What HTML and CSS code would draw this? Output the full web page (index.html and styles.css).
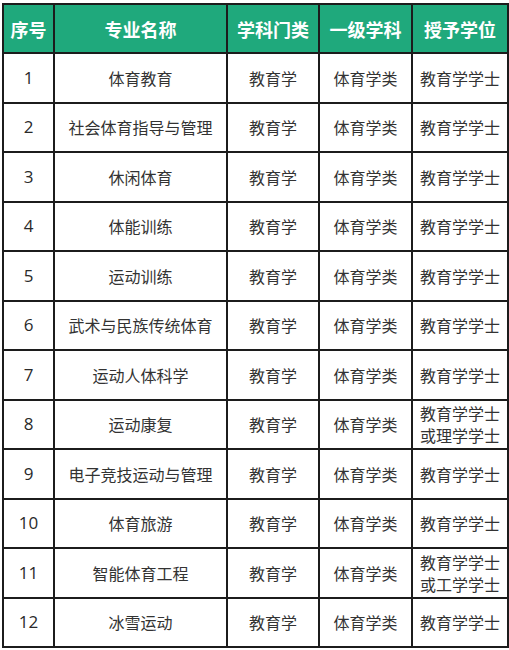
FILE: index.html
```html
<!DOCTYPE html>
<html lang="zh">
<head>
<meta charset="utf-8">
<link rel="stylesheet" href="styles.css">
</head>
<body>
<table class="majors">
  <colgroup>
    <col class="c-no"><col class="c-name"><col class="c-cat"><col class="c-sub"><col class="c-deg">
  </colgroup>
  <thead>
    <tr><th>序号</th><th>专业名称</th><th>学科门类</th><th>一级学科</th><th>授予学位</th></tr>
  </thead>
  <tbody>
    <tr><td>1</td><td>体育教育</td><td>教育学</td><td>体育学类</td><td>教育学学士</td></tr>
    <tr><td>2</td><td>社会体育指导与管理</td><td>教育学</td><td>体育学类</td><td>教育学学士</td></tr>
    <tr><td>3</td><td>休闲体育</td><td>教育学</td><td>体育学类</td><td>教育学学士</td></tr>
    <tr><td>4</td><td>体能训练</td><td>教育学</td><td>体育学类</td><td>教育学学士</td></tr>
    <tr><td>5</td><td>运动训练</td><td>教育学</td><td>体育学类</td><td>教育学学士</td></tr>
    <tr><td>6</td><td>武术与民族传统体育</td><td>教育学</td><td>体育学类</td><td>教育学学士</td></tr>
    <tr><td>7</td><td>运动人体科学</td><td>教育学</td><td>体育学类</td><td>教育学学士</td></tr>
    <tr><td>8</td><td>运动康复</td><td>教育学</td><td>体育学类</td><td class="two">教育学学士<br>或理学学士</td></tr>
    <tr><td>9</td><td>电子竞技运动与管理</td><td>教育学</td><td>体育学类</td><td>教育学学士</td></tr>
    <tr><td>10</td><td>体育旅游</td><td>教育学</td><td>体育学类</td><td>教育学学士</td></tr>
    <tr><td>11</td><td>智能体育工程</td><td>教育学</td><td>体育学类</td><td class="two">教育学学士<br>或工学学士</td></tr>
    <tr><td>12</td><td>冰雪运动</td><td>教育学</td><td>体育学类</td><td>教育学学士</td></tr>
  </tbody>
</table>
</body>
</html>
```
FILE: styles.css
```css
html, body {
  margin: 0;
  padding: 0;
  background: #ffffff;
}
body {
  font-family: "Noto Sans CJK SC", "Noto Sans", sans-serif;
}
.majors {
  border-collapse: collapse;
  table-layout: fixed;
  width: 505px;
  margin: 3px 0 0 2px;
}
.c-no { width: 51px; }
.c-name { width: 173px; }
.c-cat { width: 92px; }
.c-sub { width: 93px; }
.c-deg { width: 96px; }
.majors th,
.majors td {
  border: 2px solid #1c1c1c;
  padding: 0;
  text-align: center;
  vertical-align: middle;
}
.majors th {
  background: #1fa97c;
  color: #ffffff;
  font-size: 18px;
  font-weight: 700;
  height: 47px;
  line-height: 22px;
}
.majors td {
  color: #333333;
  font-size: 16px;
  line-height: 20px;
  height: 47.5px;
}
.majors td:first-child {
  font-family: "Open Sans", "Noto Sans CJK SC", sans-serif;
  font-size: 17px;
  color: #2a2a2a;
}
.majors td.two {
  line-height: 22px;
}
```
